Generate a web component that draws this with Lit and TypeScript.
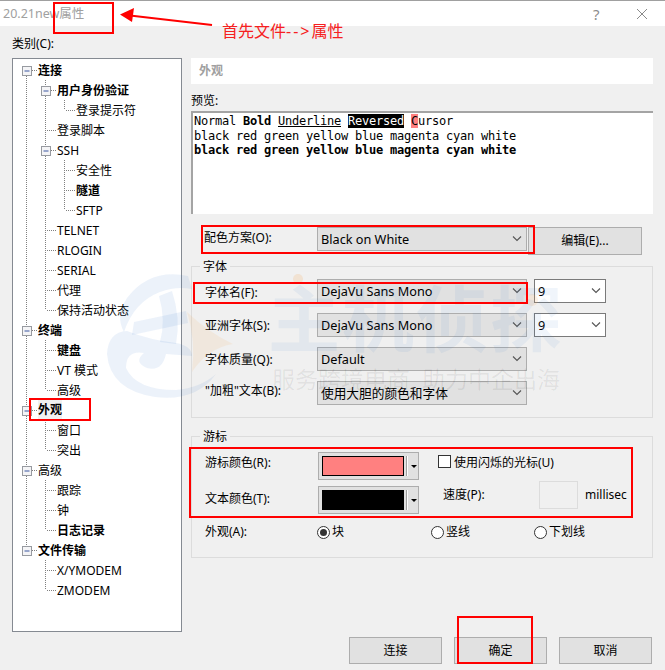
import { LitElement, html, css, svg } from "lit";
import { customElement } from "lit/decorators.js";

type Node = { t: string; l: number; b?: boolean; x?: boolean; hl?: boolean };

const TREE: Node[] = [
  { t: "连接", l: 0, b: true, x: true },
  { t: "用户身份验证", l: 1, b: true, x: true },
  { t: "登录提示符", l: 2 },
  { t: "登录脚本", l: 1 },
  { t: "SSH", l: 1, x: true },
  { t: "安全性", l: 2 },
  { t: "隧道", l: 2, b: true },
  { t: "SFTP", l: 2 },
  { t: "TELNET", l: 1 },
  { t: "RLOGIN", l: 1 },
  { t: "SERIAL", l: 1 },
  { t: "代理", l: 1 },
  { t: "保持活动状态", l: 1 },
  { t: "终端", l: 0, b: true, x: true },
  { t: "键盘", l: 1, b: true },
  { t: "VT 模式", l: 1 },
  { t: "高级", l: 1 },
  { t: "外观", l: 0, b: true, x: true, hl: true },
  { t: "窗口", l: 1 },
  { t: "突出", l: 1 },
  { t: "高级", l: 0, x: true },
  { t: "跟踪", l: 1 },
  { t: "钟", l: 1 },
  { t: "日志记录", l: 1, b: true },
  { t: "文件传输", l: 0, b: true, x: true },
  { t: "X/YMODEM", l: 1 },
  { t: "ZMODEM", l: 1 },
];

const colX = (l: number) => 13.5 + l * 19;

function hasLater(i: number, l: number) {
  for (let j = i + 1; j < TREE.length; j++) {
    if (TREE[j].l < l) return false;
    if (TREE[j].l === l) return true;
  }
  return false;
}

function hasEarlier(i: number, l: number) {
  for (let j = i - 1; j >= 0; j--) {
    if (TREE[j].l <= l) return true;
  }
  return false;
}

function rowGuides(i: number) {
  const n = TREE[i];
  const parts = [];
  for (let l = 0; l < n.l; l++) {
    if (hasLater(i, l)) parts.push(svg`<line class="dot" x1=${colX(l)} x2=${colX(l)} y1="0" y2="20"></line>`);
  }
  const x = colX(n.l);
  if (hasEarlier(i, n.l)) parts.push(svg`<line class="dot" x1=${x} x2=${x} y1="0" y2="10"></line>`);
  if (hasLater(i, n.l)) parts.push(svg`<line class="dot" x1=${x} x2=${x} y1="10" y2="20"></line>`);
  parts.push(svg`<line class="dot" x1=${x + 1} x2=${x + 10} y1="10.5" y2="10.5"></line>`);
  if (n.x) {
    parts.push(svg`<rect x=${x - 4} y="6.5" width="9" height="9" fill="#f4f4f6" stroke="#979aa0"></rect>
      <line x1=${x - 2} x2=${x + 3} y1="11" y2="11" stroke="#3a56a0"></line>`);
  }
  return parts;
}

const chevron = html`<svg class="chev" width="10" height="6" viewBox="0 0 10 6"><polyline points="1,0.5 5,4.5 9,0.5" fill="none" stroke="#555" stroke-width="1.1"></polyline></svg>`;

@customElement("app-root")
export class AppRoot extends LitElement {
  static styles = css`
    :host {
      display: block;
      position: relative;
      width: 665px;
      height: 670px;
      overflow: hidden;
      background: #f0f0f0;
      color: #000;
      font: 12px/16px "Noto Sans", "Noto Sans CJK SC", sans-serif;
    }
    .titlebar {
      box-sizing: border-box;
      height: 26px;
      background: #fff;
      border-top: 1px solid #a0a0a0;
      display: flex;
      align-items: center;
      padding: 0 17px 0 3px;
      color: #a0a0a0;
      font-size: 12.5px;
    }
    .titlebar .name { flex: 1; }
    .help { font-size: 15px; color: #8c8c8c; width: 43px; }
    .body { display: flex; gap: 9px; padding-left: 12px; }
    .left { width: 170px; }
    .cat { height: 32px; display: flex; align-items: center; padding-top: 4px; box-sizing: border-box; }
    .tree {
      box-sizing: border-box;
      height: 574px;
      background: #fff;
      border: 1px solid #858a92;
      padding-top: 1px;
    }
    .row { display: flex; height: 20px; align-items: flex-start; }
    .row svg { flex: none; display: block; }
    .dot { stroke: #808080; stroke-dasharray: 1 1; shape-rendering: crispEdges; }
    .t { white-space: nowrap; line-height: 20px; padding-top: 1px; }
    .t.b { font-weight: 700; }
    .t.hl { background: #f0f0f0 content-box; margin-left: -2px; padding: 0 2px; line-height: 20px; }
    .right { width: 462px; padding-top: 32px; }
    .head {
      height: 26px;
      background: #fff;
      padding-left: 8px;
      display: flex;
      align-items: center;
      color: #a0a0a0;
      font-weight: 700;
    }
    .plabel { height: 27px; display: flex; align-items: center; padding-top: 7px; box-sizing: border-box; }
    .preview {
      box-sizing: border-box;
      height: 103px;
      background: #fff;
      border-top: 2px solid #a4a4a4;
      border-left: 2px solid #a4a4a4;
      padding: 1px 0 0 1px;
      font: 12px/14.5px "DejaVu Sans Mono", monospace;
      letter-spacing: -0.225px;
      white-space: pre;
    }
    .preview b { font-weight: 700; }
    .preview u { text-underline-offset: 1px; }
    .rev { background: #000; color: #fff; }
    .cur { background: #ff8080; }
    .scheme { display: flex; margin-top: 13px; padding-left: 13px; align-items: flex-start; }
    .lbl { width: 112px; flex: none; white-space: nowrap; }
    .scheme .lbl { line-height: 22px; width: 113px; }
    .sel {
      box-sizing: border-box;
      width: 210px;
      height: 24px;
      background: #e1e1e1;
      border: 1px solid #adadad;
      display: flex;
      align-items: center;
      justify-content: space-between;
      padding: 0 4px 0 3px;
      font-size: 12.7px;
      flex: none;
    }
    .sel.small {
      width: 72px;
      background: #fff;
      border-color: #7a7a7a;
      margin-left: 7px;
    }
    .edit {
      box-sizing: border-box;
      width: 114px;
      height: 28px;
      margin-left: 1px;
      background: #e1e1e1;
      border: 1px solid #adadad;
      display: flex;
      align-items: center;
      justify-content: center;
    }
    .group {
      box-sizing: border-box;
      border: 1px solid #dcdcdc;
      padding: 0 0 0 13px;
    }
    .legend {
      width: fit-content;
      margin: -8px 0 0 -5px;
      padding: 0 3px 0 3px;
      height: 16px;
      background: #f0f0f0;
    }
    .font { margin-top: 11px; height: 152px; }
    .frows { display: grid; gap: 10px; margin-top: 4px; }
    .frow { display: flex; align-items: center; height: 24px; }
    .d4 { padding-top: 4px; }
    .d2 { padding-top: 2px; }
    .u3 { padding-bottom: 5px; }
    .cursor { margin-top: 18px; height: 122px; }
    .cgrid { display: grid; grid-template-columns: 113px 101px 1fr; grid-template-rows: 28px 28px; row-gap: 6px; margin-top: 7px; }
    .cgrid .lbl { align-self: center; box-sizing: border-box; }
    .cgrid .u6 { padding-bottom: 6px; }
    .cgrid .u2 { padding-bottom: 2px; }
    .swatch {
      box-sizing: border-box;
      background: #e1e1e1;
      border: 1px solid #adadad;
      display: flex;
      align-items: center;
      padding: 0 0 0 3px;
    }
    .chip { box-sizing: border-box; width: 82px; height: 20px; border: 1px solid #000; flex: none; }
    .chip.red { background: #ff8080; }
    .chip.blk { background: #000; }
    .sep { width: 1px; height: 20px; background: #a0a0a0; margin-left: 2px; border-right: 1px solid #fff; flex: none; }
    .caret { width: 0; height: 0; border: 3px solid transparent; border-top: 3px solid #000; border-bottom: 0; margin-left: 3px; }
    .chk { display: flex; align-items: flex-start; gap: 3px; margin: 3px 0 0 19px; }
    .box { box-sizing: border-box; width: 13px; height: 13px; background: #fff; border: 1px solid #333; flex: none; }
    .speed { display: flex; align-items: center; margin: -5px 0 0 24px; height: 28px; }
    .speed .sl { width: 96px; flex: none; }
    .inp { box-sizing: border-box; width: 39px; height: 28px; border: 1px solid #dcdcdc; flex: none; }
    .speed .ms { margin-left: 7px; }
    .shape { display: flex; align-items: center; height: 16px; margin-top: 10px; }
    .radio { display: flex; align-items: center; gap: 2px; }
    .r1 { width: 114px; }
    .r2 { width: 103px; }
    .dotr { box-sizing: border-box; width: 13px; height: 13px; border-radius: 50%; border: 1px solid #333; background: #fff; display: flex; align-items: center; justify-content: center; flex: none; }
    .dotr.on::after { content: ""; width: 7px; height: 7px; border-radius: 50%; background: #333; }
    .foot { display: flex; justify-content: flex-end; gap: 12px; padding-right: 13px; margin-top: 5px; }
    .btn {
      box-sizing: border-box;
      width: 93px;
      height: 27px;
      background: #e1e1e1;
      border: 1px solid #adadad;
      display: flex;
      align-items: center;
      justify-content: center;
    }
    .wm { position: absolute; left: 0; top: 0; pointer-events: none; }
    .wm-title {
      position: absolute;
      left: 268px;
      top: 268px;
      font-size: 72px;
      line-height: 100px;
      font-weight: 700;
      letter-spacing: 2px;
      color: rgba(40, 110, 200, 0.07);
      white-space: nowrap;
      pointer-events: none;
    }
    .wm-sub {
      position: absolute;
      left: 272px;
      top: 364px;
      font-size: 23px;
      line-height: 30px;
      word-spacing: 6px;
      color: rgba(0, 0, 0, 0.07);
      white-space: nowrap;
      pointer-events: none;
    }
    .ann { position: absolute; left: 0; top: 0; pointer-events: none; }
    .ann rect { fill: none; stroke: #f00; stroke-width: 2; }
    .note {
      position: absolute;
      left: 222px;
      top: 20px;
      font-size: 16px;
      line-height: 22px;
      color: #f62020;
      white-space: nowrap;
    }
    .note span { letter-spacing: 2px; }
  `;

  private selRow(label: string, cls: string, value: string, size?: string) {
    return html`<div class="frow">
      <div class="lbl ${cls}">${label}</div>
      <div class="sel"><span>${value}</span>${chevron}</div>
      ${size ? html`<div class="sel small"><span>${size}</span>${chevron}</div>` : ""}
    </div>`;
  }

  render() {
    return html`
      <div class="titlebar">
        <span class="name">20.21new属性</span>
        <span class="help">?</span>
        <svg width="12" height="12" viewBox="0 0 12 12"><path d="M1 1 L11 11 M11 1 L1 11" stroke="#8a8a8a" fill="none"></path></svg>
      </div>
      <div class="body">
        <div class="left">
          <div class="cat">类别(C):</div>
          <div class="tree">
            ${TREE.map((n, i) => html`<div class="row">
              <svg width=${25 + n.l * 19} height="20">${rowGuides(i)}</svg>
              <span class="t ${n.b ? "b" : ""} ${n.hl ? "hl" : ""}">${n.t}</span>
            </div>`)}
          </div>
        </div>
        <div class="right">
          <div class="head">外观</div>
          <div class="plabel">预览:</div>
          <div class="preview">Normal <b>Bold</b> <u>Underline</u> <span class="rev">Reversed</span> <span class="cur">C</span>ursor
black red green yellow blue magenta cyan white
<b>black red green yellow blue magenta cyan white</b></div>
          <div class="scheme">
            <div class="lbl">配色方案(O):</div>
            <div class="sel"><span>Black on White</span>${chevron}</div>
            <div class="edit">编辑(E)...</div>
          </div>
          <div class="group font">
            <div class="legend">字体</div>
            <div class="frows">
              ${this.selRow("字体名(F):", "d4", "DejaVu Sans Mono", "9")}
              ${this.selRow("亚洲字体(S):", "d2", "DejaVu Sans Mono", "9")}
              ${this.selRow("字体质量(Q):", "d2", "Default")}
              ${this.selRow('"加粗"文本(B):', "u3", "使用大胆的颜色和字体")}
            </div>
          </div>
          <div class="group cursor">
            <div class="legend">游标</div>
            <div class="cgrid">
              <div class="lbl u6">游标颜色(R):</div>
              <div class="swatch"><div class="chip red"></div><div class="sep"></div><div class="caret"></div></div>
              <div class="chk"><div class="box"></div><span>使用闪烁的光标(U)</span></div>
              <div class="lbl u2">文本颜色(T):</div>
              <div class="swatch"><div class="chip blk"></div><div class="sep"></div><div class="caret"></div></div>
              <div class="speed"><span class="sl">速度(P):</span><div class="inp"></div><span class="ms">millisec</span></div>
            </div>
            <div class="shape">
              <div class="lbl">外观(A):</div>
              <div class="radio r1"><div class="dotr on"></div><span>块</span></div>
              <div class="radio r2"><div class="dotr"></div><span>竖线</span></div>
              <div class="radio"><div class="dotr"></div><span>下划线</span></div>
            </div>
          </div>
        </div>
      </div>
      <div class="foot">
        <div class="btn">连接</div>
        <div class="btn">确定</div>
        <div class="btn">取消</div>
      </div>

      <svg class="wm" width="665" height="670">
        <g fill="rgba(40,110,200,0.085)">
          <path d="M188 276 Q150 268 127 298 Q115 316 124 332 Q134 302 160 292 Q176 286 192 289 Z"></path>
          <path d="M159 296 L172 291 Q181 318 176 344 L160 342 Q166 320 159 296 Z"></path>
          <path d="M134 322 L186 311 L188 323 L132 335 Z"></path>
          <path d="M107 354 Q108 332 127 331 Q150 340 176 343 Q192 346 192 356 L166 354 Q162 372 147 368 Q133 362 144 353 Q126 350 126 368 Q136 390 176 390 Q200 388 216 374 Q196 402 155 397 Q110 390 107 354 Z"></path>
        </g>
        <path d="M187 312 Q208 332 233 344 Q208 348 192 372 Q196 340 187 312 Z" fill="rgba(245,170,90,0.12)"></path>
        <circle cx="298" cy="279" r="5" fill="rgba(245,170,90,0.2)"></circle>
        <circle cx="532" cy="300" r="6" fill="rgba(245,170,90,0.15)"></circle>
      </svg>
      <div class="wm-title">主机侦探</div>
      <div class="wm-sub">服务跨境电商 助力中企出海</div>

      <svg class="ann" width="665" height="670">
        <rect x="54" y="3" width="59" height="30"></rect>
        <rect x="30" y="399" width="60" height="21"></rect>
        <rect x="202" y="226" width="332" height="27"></rect>
        <rect x="194" y="283" width="333" height="20"></rect>
        <rect x="190" y="448" width="442" height="69"></rect>
        <rect x="458" y="617" width="74" height="46"></rect>
        <path d="M130 15.5 L212 25" stroke="#f00" stroke-width="2" fill="none"></path>
        <path d="M120 14.5 L134 8 L132 22 Z" fill="#f00"></path>
      </svg>
      <div class="note">首先文件<span>--&gt;</span>属性</div>
    `;
  }
}
